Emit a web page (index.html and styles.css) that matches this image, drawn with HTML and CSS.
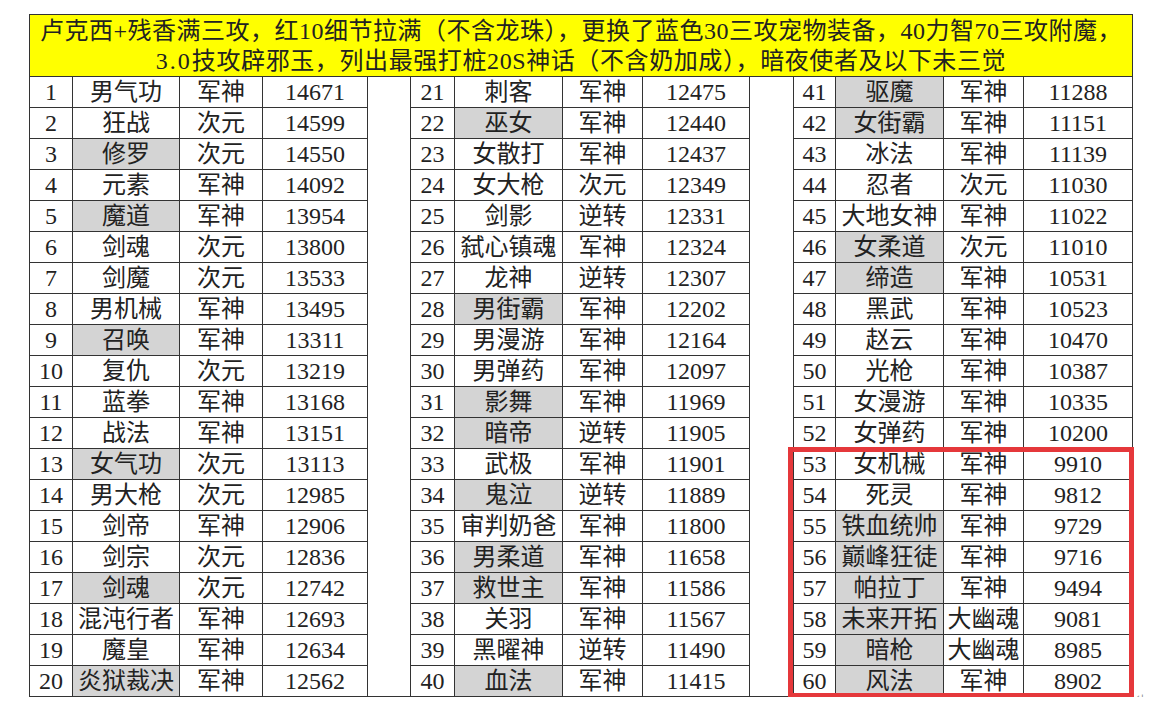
FILE: index.html
```html
<!DOCTYPE html>
<html lang="zh-CN">
<head>
<meta charset="utf-8">
<title>神话打桩排行</title>
<link rel="stylesheet" href="styles.css">
</head>
<body>
<div class="page">
  <div class="sheet">
    <table class="rank">
      <colgroup>
        <col class="c-n1"><col class="c-m1"><col class="c-t1"><col class="c-s1"><col class="c-g1">
        <col class="c-n2"><col class="c-m2"><col class="c-t2"><col class="c-s2"><col class="c-g2">
        <col class="c-n3"><col class="c-m3"><col class="c-t3"><col class="c-s3">
      </colgroup>
      <thead>
        <tr><th class="title" colspan="14"><span class="l1">卢克西+残香满三攻，红10细节拉满（不含龙珠），更换了蓝色30三攻宠物装备，40力智70三攻附魔，</span><br><span class="l2"><span class="mono">3.0</span>技攻辟邪玉，列出最强打桩20S神话（不含奶加成），暗夜使者及以下未三觉</span></th></tr>
      </thead>
      <tbody>
        <tr><td>1</td><td>男气功</td><td>军神</td><td>14671</td><td class="gap" rowspan="20"></td><td>21</td><td>刺客</td><td>军神</td><td>12475</td><td class="gap" rowspan="20"></td><td>41</td><td class="hl">驱魔</td><td>军神</td><td>11288</td></tr>
        <tr><td>2</td><td>狂战</td><td>次元</td><td>14599</td><td>22</td><td class="hl">巫女</td><td>军神</td><td>12440</td><td>42</td><td class="hl">女街霸</td><td>军神</td><td>11151</td></tr>
        <tr><td>3</td><td class="hl">修罗</td><td>次元</td><td>14550</td><td>23</td><td>女散打</td><td>军神</td><td>12437</td><td>43</td><td>冰法</td><td>军神</td><td>11139</td></tr>
        <tr><td>4</td><td>元素</td><td>军神</td><td>14092</td><td>24</td><td>女大枪</td><td>次元</td><td>12349</td><td>44</td><td>忍者</td><td>次元</td><td>11030</td></tr>
        <tr><td>5</td><td class="hl">魔道</td><td>军神</td><td>13954</td><td>25</td><td>剑影</td><td>逆转</td><td>12331</td><td>45</td><td>大地女神</td><td>军神</td><td>11022</td></tr>
        <tr><td>6</td><td>剑魂</td><td>次元</td><td>13800</td><td>26</td><td>弑心镇魂</td><td>军神</td><td>12324</td><td>46</td><td class="hl">女柔道</td><td>次元</td><td>11010</td></tr>
        <tr><td>7</td><td>剑魔</td><td>次元</td><td>13533</td><td>27</td><td>龙神</td><td>逆转</td><td>12307</td><td>47</td><td class="hl">缔造</td><td>军神</td><td>10531</td></tr>
        <tr><td>8</td><td>男机械</td><td>军神</td><td>13495</td><td>28</td><td class="hl">男街霸</td><td>军神</td><td>12202</td><td>48</td><td>黑武</td><td>军神</td><td>10523</td></tr>
        <tr><td>9</td><td class="hl">召唤</td><td>军神</td><td>13311</td><td>29</td><td>男漫游</td><td>军神</td><td>12164</td><td>49</td><td>赵云</td><td>军神</td><td>10470</td></tr>
        <tr><td>10</td><td>复仇</td><td>次元</td><td>13219</td><td>30</td><td>男弹药</td><td>军神</td><td>12097</td><td>50</td><td>光枪</td><td>军神</td><td>10387</td></tr>
        <tr><td>11</td><td>蓝拳</td><td>军神</td><td>13168</td><td>31</td><td class="hl">影舞</td><td>军神</td><td>11969</td><td>51</td><td>女漫游</td><td>军神</td><td>10335</td></tr>
        <tr><td>12</td><td>战法</td><td>军神</td><td>13151</td><td>32</td><td class="hl">暗帝</td><td>逆转</td><td>11905</td><td>52</td><td>女弹药</td><td>军神</td><td>10200</td></tr>
        <tr><td>13</td><td class="hl">女气功</td><td>次元</td><td>13113</td><td>33</td><td>武极</td><td>军神</td><td>11901</td><td>53</td><td>女机械</td><td>军神</td><td>9910</td></tr>
        <tr><td>14</td><td>男大枪</td><td>次元</td><td>12985</td><td>34</td><td class="hl">鬼泣</td><td>逆转</td><td>11889</td><td>54</td><td>死灵</td><td>军神</td><td>9812</td></tr>
        <tr><td>15</td><td>剑帝</td><td>军神</td><td>12906</td><td>35</td><td>审判奶爸</td><td>军神</td><td>11800</td><td>55</td><td class="hl">铁血统帅</td><td>军神</td><td>9729</td></tr>
        <tr><td>16</td><td>剑宗</td><td>次元</td><td>12836</td><td>36</td><td class="hl">男柔道</td><td>军神</td><td>11658</td><td>56</td><td class="hl">巅峰狂徒</td><td>军神</td><td>9716</td></tr>
        <tr><td>17</td><td class="hl">剑魂</td><td>次元</td><td>12742</td><td>37</td><td class="hl">救世主</td><td>军神</td><td>11586</td><td>57</td><td class="hl">帕拉丁</td><td>军神</td><td>9494</td></tr>
        <tr><td>18</td><td>混沌行者</td><td>军神</td><td>12693</td><td>38</td><td>关羽</td><td>军神</td><td>11567</td><td>58</td><td class="hl">未来开拓</td><td>大幽魂</td><td>9081</td></tr>
        <tr><td>19</td><td>魔皇</td><td>军神</td><td>12634</td><td>39</td><td>黑曜神</td><td>逆转</td><td>11490</td><td>59</td><td class="hl">暗枪</td><td>大幽魂</td><td>8985</td></tr>
        <tr><td>20</td><td class="hl">炎狱裁决</td><td>军神</td><td>12562</td><td>40</td><td class="hl">血法</td><td>军神</td><td>11415</td><td>60</td><td class="hl">风法</td><td>军神</td><td>8902</td></tr>
      </tbody>
    </table>
    <div class="mark-box" aria-hidden="true"></div>
  </div>
  <span class="para">↵</span>
</div>
</body>
</html>
```

FILE: styles.css
```css
html, body {
  margin: 0;
  padding: 0;
  background: #ffffff;
}

.page {
  display: flex;
  align-items: flex-end;
  padding: 14px 0 0 29px;
}

.sheet {
  position: relative;
}

.rank {
  border-collapse: collapse;
  table-layout: fixed;
  width: 1104px;
  font-family: "Liberation Serif", "Noto Sans CJK SC", serif;
  font-size: 24px;
  color: #222222;
}

.c-n1 { width: 43px; }
.c-m1 { width: 107px; }
.c-t1 { width: 83px; }
.c-s1 { width: 105px; }
.c-g1 { width: 43px; }
.c-n2 { width: 44px; }
.c-m2 { width: 108px; }
.c-t2 { width: 80px; }
.c-s2 { width: 107px; }
.c-g2 { width: 44px; }
.c-n3 { width: 42px; }
.c-m3 { width: 108px; }
.c-t3 { width: 80px; }
.c-s3 { width: 109px; }

.rank th,
.rank td {
  border: 1px solid #333333;
  padding: 0;
  text-align: center;
  vertical-align: middle;
  white-space: nowrap;
  overflow: hidden;
}

.rank td {
  height: 30px;
  line-height: 30px;
}

.rank .title {
  background: #ffff00;
  font-weight: normal;
  height: 60px;
  line-height: 30px;
  padding: 1px 0 0 0;
  box-sizing: border-box;
}

.rank .title .l1 {
  letter-spacing: 0.5px;
}

.rank .title .l2 {
  letter-spacing: 0.6px;
}

.rank .title .mono {
  letter-spacing: 2px;
}

.rank .hl {
  background: #d4d4d4;
}

.rank .gap {
  border-top: none;
}

.mark-box {
  position: absolute;
  left: 759px;
  top: 433px;
  width: 346px;
  height: 251px;
  border: 5px solid #e5383b;
  box-sizing: border-box;
  pointer-events: none;
}

.para {
  font-family: "DejaVu Sans", sans-serif;
  font-size: 10px;
  color: #888888;
  line-height: 10px;
  margin-left: 3px;
  margin-bottom: -6px;
}
```
